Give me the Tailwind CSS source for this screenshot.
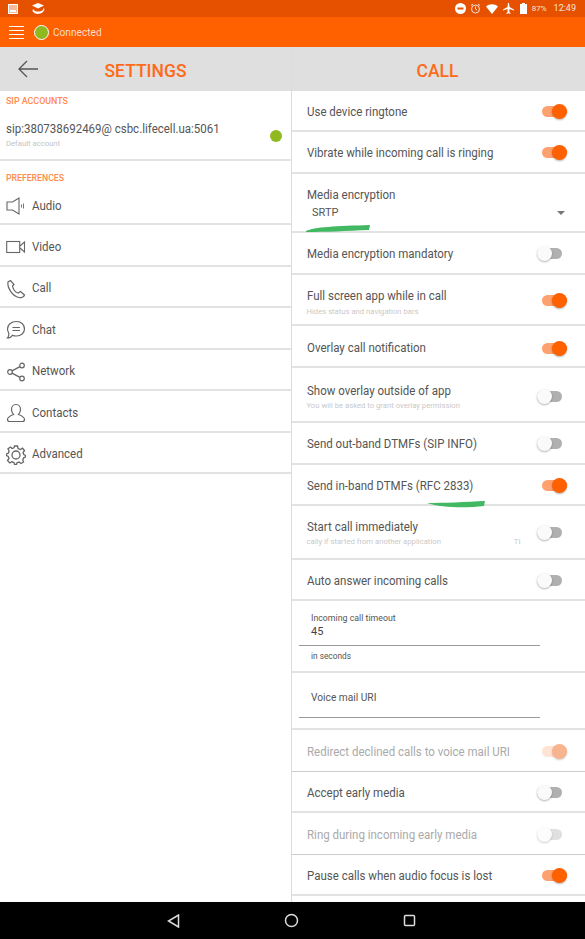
<!DOCTYPE html>
<html lang="en">
<head>
    <meta charset="UTF-8">
    <meta name="viewport" content="width=device-width, initial-scale=1.0">
    <title>Settings</title>
    <script src="https://cdn.jsdelivr.net/npm/@tailwindcss/browser@4"></script>
</head>
<body class="bg-white font-['Roboto',sans-serif] text-[#555]">
<div class="relative flex flex-col w-[585px] h-[939px] overflow-hidden">
    <!-- status bar -->
    <div class="flex items-center justify-between flex-none h-[17px] bg-[#e65100] pl-2 pr-[9px] text-white">
        <div class="flex items-center gap-[13px]">
            <svg class="w-[10px] h-[10px]" viewBox="0 0 10 10"><rect x="0.5" y="0.5" width="9" height="9" fill="#f5b99c" stroke="#fff" stroke-width="1"/><rect x="2" y="6" width="6" height="2" fill="#fff"/></svg>
            <svg class="w-[14px] h-[14px]" viewBox="0 0 14 14" fill="#fff"><path d="M7 1 L13 3.5 L7 6.5 L1 3.5 Z"/><path d="M2 7 C3.5 10 9 10.5 12 8 L12.5 6 L13.5 7 C13 12 4 14 1.500 9 Z"/></svg>
        </div>
        <div class="flex items-center text-[9px] text-[#f8e4d8]">
            <svg class="w-[11px] h-[11px] mr-[4px]" viewBox="0 0 11 11"><circle cx="5.500" cy="5.500" r="5.500" fill="#fff"/><rect x="2.500" y="4.500" width="6" height="2" fill="#e65100"/></svg>
            <svg class="w-[11px] h-[11px] mr-[5px]" viewBox="0 0 11 11" fill="none" stroke="#f8e4d8" stroke-width="1"><circle cx="5.500" cy="6" r="4"/><path d="M5.500 3.500V6L7 7M1 2.500L3 1M10 2.500L8 1"/></svg>
            <svg class="w-[12px] h-[10px] mr-[5px]" viewBox="0 0 12 10" fill="#fff"><path d="M0 2.500C3.500 -0.500 8.500 -0.500 12 2.500L6 10Z"/></svg>
            <svg class="w-[11px] h-[11px] mr-[6px]" viewBox="0 0 11 11" fill="#fff"><path d="M5 0H6L6.500 4L11 6.500V7.500L6.500 6L6.300 9L7.500 10V11L5.500 10.300L3.500 11V10L4.700 9L4.500 6L0 7.500V6.500L4.500 4Z"/></svg>
            <svg class="w-[7px] h-[11px] mr-[5px]" viewBox="0 0 7 11" fill="#fff"><path d="M2 0H5V1H7V11H0V1H2Z"/></svg>
            <span class="mr-[7px] text-[8px]">87%</span>
            <span>12:49</span>
        </div>
    </div>

    <!-- toolbar -->
    <div class="flex items-center flex-none h-[30px] bg-[#ff6000] pl-[9px]">
        <div class="flex flex-col gap-[3px] w-[15px]">
            <div class="h-px bg-white"></div><div class="h-px bg-white"></div><div class="h-px bg-white"></div><div class="h-px bg-white"></div>
        </div>
        <div class="w-[15px] h-[15px] ml-[10px] rounded-full bg-[#8fb821] border border-white"></div>
        <span class="ml-[4px] mt-[2px] text-[11px] origin-left scale-x-[0.92] text-[#fbdcc8]">Connected</span>
    </div>

    <div class="flex flex-1 min-h-0">
        <!-- left pane -->
        <div class="flex-none w-[292px] border-r border-[#dcdcdc]">
            <div class="relative flex items-center justify-center h-[44px] pt-[5px] bg-[#dfdfdf]">
                <svg class="absolute left-[17px] top-[13px] w-[22px] h-[18px]" viewBox="0 0 22 18" fill="none" stroke="#555" stroke-width="1.300"><path d="M21 9H2M10 1L2 9L10 17"/></svg>
                <span class="text-[17.500px] font-medium text-[#ff6a1a]">SETTINGS</span>
            </div>
            <div class="h-[21px] pl-[6px] pt-[5px] text-[8.900px] leading-[11px] font-medium text-[#ff8a4c]">SIP ACCOUNTS</div>
            <div class="flex items-center justify-between h-[49px] pr-[9px] pl-[6px] border-b-2 border-[#e2e2e2]">
                <div>
                    <div class="text-[12.500px] leading-[16px] origin-left scale-x-[0.92] text-[#555]">sip:380738692469@ csbc.lifecell.ua:5061</div>
                    <div class="text-[7.700px] leading-[13px] text-[#c4c4c4]">Default account</div>
                </div>
                <div class="w-[12px] h-[12px] rounded-full bg-[#8fb821]"></div>
            </div>
            <div class="h-[22px] pl-[6px] pt-[12px] text-[8.700px] leading-[11px] font-medium text-[#ff8a4c]">PREFERENCES</div>
            <div class="flex items-center h-[42px] pl-[6px] pt-[6px] border-b-2 border-[#e2e2e2]">
                <svg class="w-[20px] h-[18px] mr-[6px]" viewBox="0 0 20 18" fill="none" stroke="#666" stroke-width="1.100"><path d="M1 5H6.500L13 1V17L6.500 13H1Z"/><path d="M15.500 7.500V10.500M17.500 6.500V11.500" stroke-width="0.900"/></svg>
                <span class="text-[12.500px] origin-left scale-x-[0.92]">Audio</span>
            </div>
            <div class="flex items-center h-[41.500px] pl-[6px] pt-[5px] border-b-2 border-[#e2e2e2]">
                <svg class="w-[20px] h-[14px] mr-[6px]" viewBox="0 0 20 14" fill="none" stroke="#666" stroke-width="1.100"><rect x="0.700" y="1.500" width="13" height="11"/><path d="M14 6L18.500 2V12L14 8"/></svg>
                <span class="text-[12.500px] origin-left scale-x-[0.92]">Video</span>
            </div>
            <div class="flex items-center h-[41.500px] pl-[6px] pt-[5px] border-b-2 border-[#e2e2e2]">
                <svg class="w-[20px] h-[20px] mr-[6px]" viewBox="0 0 20 20" fill="none" stroke="#666" stroke-width="1.200"><path d="M4.500 1.500L2 3C1 8 6 17 13 18.500C15 19 18 18 18.500 16L14.500 12.500L12 14C9 13 7 9.500 6.500 7L8 5.500Z"/></svg>
                <span class="text-[12.500px] origin-left scale-x-[0.92]">Call</span>
            </div>
            <div class="flex items-center h-[41.500px] pl-[6px] pt-[5px] border-b-2 border-[#e2e2e2]">
                <svg class="w-[20px] h-[20px] mr-[6px]" viewBox="0 0 20 20" fill="none" stroke="#666" stroke-width="1.200"><path d="M10.500 1.500C15.500 1.500 18.500 5 18.500 9C18.500 13 15 16 10.500 16C9 16 7.500 15.800 6.500 15.200C5.500 17 3.500 18 1.500 18C3 16.500 3 15 2.800 13C2 12 1.500 10.500 1.500 9C1.500 5 5 1.500 10.500 1.500Z"/><path d="M6.500 7.500H14M6.500 10.500H14"/></svg>
                <span class="text-[12.500px] origin-left scale-x-[0.92]">Chat</span>
            </div>
            <div class="flex items-center h-[41.500px] pl-[6px] pt-[5px] border-b-2 border-[#e2e2e2]">
                <svg class="w-[20px] h-[20px] mr-[6px]" viewBox="0 0 20 20" fill="none" stroke="#666" stroke-width="1.200"><circle cx="4" cy="10" r="2.300"/><circle cx="16" cy="3.500" r="2.300"/><circle cx="16" cy="16.500" r="2.300"/><path d="M6 8.900L14 4.600M6 11.100L14 15.400"/></svg>
                <span class="text-[12.500px] origin-left scale-x-[0.92]">Network</span>
            </div>
            <div class="flex items-center h-[41.500px] pl-[6px] pt-[5px] border-b-2 border-[#e2e2e2]">
                <svg class="w-[20px] h-[20px] mr-[6px]" viewBox="0 0 20 20" fill="none" stroke="#666" stroke-width="1.200"><path d="M10 1.500C13 1.500 14.500 4 14.500 6.500C14.500 9 13.500 10.500 12.500 11.500C15 12.500 18.500 14 18.500 16.500C18.500 18 17.500 18.500 16.500 18.500H3.500C2.500 18.500 1.500 18 1.500 16.500C1.500 14 5 12.500 7.500 11.500C6.500 10.500 5.500 9 5.500 6.500C5.500 4 7 1.500 10 1.500Z"/></svg>
                <span class="text-[12.500px] origin-left scale-x-[0.92]">Contacts</span>
            </div>
            <div class="flex items-center h-[41.500px] pl-[6px] pt-[5px] border-b-2 border-[#e2e2e2]">
                <svg class="w-[20px] h-[20px] mr-[6px]" viewBox="0 0 20 20" fill="none" stroke="#666" stroke-width="1.300"><path d="M8.500 1H11.500L12 3.500L14.300 4.500L16.500 3.200L18.500 5.500L17 7.500L17.800 9.500L19.500 10.500V12L17.600 12.800L16.800 15L17.500 17L15 18.500L13.200 17L11 17.800L10.500 19.500H8.500L8 17.500L5.800 16.800L3.800 18L1.500 15.500L3 13.500L2.200 11.500L0.500 10.500V9L2.500 8L3 5.800L2 3.800L4.500 2L6 3.500L8 2.800Z"/><circle cx="10" cy="10" r="4"/></svg>
                <span class="text-[12.500px] origin-left scale-x-[0.92]">Advanced</span>
            </div>
        </div>

        <!-- right pane -->
        <div class="flex-1 min-w-0">
            <div class="flex items-center justify-center h-[44px] pt-[5px] bg-[#dfdfdf] pr-[2px]">
                <span class="text-[17.500px] font-medium text-[#ff6a1a]">CALL</span>
            </div>

            <div class="flex items-center justify-between h-[41px] pt-[2px] pl-[14.500px] pr-[18px] border-b-2 border-[#e2e2e2]">
                <span class="mt-[2px] text-[12.500px] origin-left scale-x-[0.92]">Use device ringtone</span>
                <div class="flex items-center justify-end w-[25px] h-[11px] rounded-full bg-[#ffa06f]"><div class="flex-none w-[15px] h-[15px] rounded-full bg-[#ff6000] shadow-[0_1px_2px_rgba(0,0,0,0.3)]"></div></div>
            </div>
            <div class="flex items-center justify-between h-[41.500px] pt-[2px] pl-[14.500px] pr-[18px] border-b-2 border-[#e2e2e2]">
                <span class="mt-[2px] text-[12.500px] origin-left scale-x-[0.92]">Vibrate while incoming call is ringing</span>
                <div class="flex items-center justify-end w-[25px] h-[11px] rounded-full bg-[#ffa06f]"><div class="flex-none w-[15px] h-[15px] rounded-full bg-[#ff6000] shadow-[0_1px_2px_rgba(0,0,0,0.3)]"></div></div>
            </div>
            <div class="flex flex-col h-[59.500px] pt-[13px] pl-[14.500px] pr-[19px] border-b-2 border-[#e2e2e2]">
                <span class="text-[12.500px] leading-[16px] origin-left scale-x-[0.92]">Media encryption</span>
                <div class="flex items-center justify-between mt-[3px] pl-[5.500px]">
                    <span class="text-[11px] leading-[14px]">SRTP</span>
                    <div class="w-0 h-0 mr-[1px] border-x-[4px] border-x-transparent border-t-[4px] border-t-[#777]"></div>
                </div>
            </div>
            <div class="flex items-center justify-between h-[41.500px] pt-[2px] pl-[14.500px] pr-[18px] border-b-2 border-[#e2e2e2]">
                <span class="mt-[2px] text-[12.500px] origin-left scale-x-[0.92]">Media encryption mandatory</span>
                <div class="flex items-center justify-start w-[25px] h-[11px] mr-[5.500px] rounded-full bg-[#b0b0b0]"><div class="flex-none w-[15px] h-[15px] rounded-full bg-[#fafafa] shadow-[0_1px_2px_rgba(0,0,0,0.3)]"></div></div>
            </div>
            <div class="flex items-center justify-between h-[51px] pt-[3px] pl-[14.500px] pr-[18px] border-b-2 border-[#e2e2e2]">
                <div class="self-start mt-[10px]">
                    <div class="text-[12.500px] leading-[15px] origin-left scale-x-[0.92]">Full screen app while in call</div>
                    <div class="text-[7.700px] leading-[17px] text-[#c9c9c9]">Hides status and navigation bars</div>
                </div>
                <div class="flex items-center justify-end w-[25px] h-[11px] rounded-full bg-[#ffa06f]"><div class="flex-none w-[15px] h-[15px] rounded-full bg-[#ff6000] shadow-[0_1px_2px_rgba(0,0,0,0.3)]"></div></div>
            </div>
            <div class="flex items-center justify-between h-[42px] pt-[5px] pl-[14.500px] pr-[18px] border-b-2 border-[#e2e2e2]">
                <span class="mt-[1px] text-[12.500px] origin-left scale-x-[0.92]">Overlay call notification</span>
                <div class="flex items-center justify-end w-[25px] h-[11px] rounded-full bg-[#ffa06f]"><div class="flex-none w-[15px] h-[15px] rounded-full bg-[#ff6000] shadow-[0_1px_2px_rgba(0,0,0,0.3)]"></div></div>
            </div>
            <div class="flex items-center justify-between h-[55px] pt-[4px] pl-[14.500px] pr-[18px] border-b-2 border-[#e2e2e2]">
                <div class="self-start mt-[11px]">
                    <div class="text-[12.500px] leading-[15px] origin-left scale-x-[0.92]">Show overlay outside of app</div>
                    <div class="text-[7.700px] leading-[15px] text-[#c9c9c9]">You will be asked to grant overlay permission</div>
                </div>
                <div class="flex items-center justify-start w-[25px] h-[11px] mr-[5.500px] rounded-full bg-[#b0b0b0]"><div class="flex-none w-[15px] h-[15px] rounded-full bg-[#fafafa] shadow-[0_1px_2px_rgba(0,0,0,0.3)]"></div></div>
            </div>
            <div class="flex items-center justify-between h-[42px] pt-[2px] pl-[14.500px] pr-[18px] border-b-2 border-[#e2e2e2]">
                <span class="mt-[2px] text-[12.500px] origin-left scale-x-[0.92]">Send out-band DTMFs (SIP INFO)</span>
                <div class="flex items-center justify-start w-[25px] h-[11px] mr-[5.500px] rounded-full bg-[#b0b0b0]"><div class="flex-none w-[15px] h-[15px] rounded-full bg-[#fafafa] shadow-[0_1px_2px_rgba(0,0,0,0.3)]"></div></div>
            </div>
            <div class="flex items-center justify-between h-[41.500px] pt-[2px] pl-[14.500px] pr-[18px] border-b-2 border-[#e2e2e2]">
                <span class="mt-[2px] text-[12.500px] origin-left scale-x-[0.92]">Send in-band DTMFs (RFC 2833)</span>
                <div class="flex items-center justify-end w-[25px] h-[11px] rounded-full bg-[#ffa06f]"><div class="flex-none w-[15px] h-[15px] rounded-full bg-[#ff6000] shadow-[0_1px_2px_rgba(0,0,0,0.3)]"></div></div>
            </div>
            <div class="flex items-center justify-between h-[53.500px] pt-[2px] pl-[14.500px] pr-[18px] border-b-2 border-[#e2e2e2]">
                <div class="flex-1 self-start mt-[11px]">
                    <div class="text-[12.500px] leading-[15px] origin-left scale-x-[0.92]">Start call immediately</div>
                    <div class="flex justify-between pr-[16px] text-[7.700px] leading-[15px] text-[#c9c9c9]"><span>cally if started from another application</span><span>TI</span></div>
                </div>
                <div class="flex items-center justify-start w-[25px] h-[11px] mr-[5.500px] rounded-full bg-[#b0b0b0]"><div class="flex-none w-[15px] h-[15px] rounded-full bg-[#fafafa] shadow-[0_1px_2px_rgba(0,0,0,0.3)]"></div></div>
            </div>
            <div class="flex items-center justify-between h-[41.500px] pt-[2px] pl-[14.500px] pr-[18px] border-b-2 border-[#e2e2e2]">
                <span class="mt-[2px] text-[12.500px] origin-left scale-x-[0.92]">Auto answer incoming calls</span>
                <div class="flex items-center justify-start w-[25px] h-[11px] mr-[5.500px] rounded-full bg-[#b0b0b0]"><div class="flex-none w-[15px] h-[15px] rounded-full bg-[#fafafa] shadow-[0_1px_2px_rgba(0,0,0,0.3)]"></div></div>
            </div>
            <div class="h-[72px] pt-[12px] border-b-2 border-[#e2e2e2]">
                <div class="w-[241px] ml-[7px] pl-[12px] pb-[6px] border-b border-[#999]">
                    <div class="text-[8.800px] leading-[11px]">Incoming call timeout</div>
                    <div class="text-[11px] leading-[15px] text-[#444]">45</div>
                </div>
                <div class="ml-[19px] mt-[5px] text-[8.300px] leading-[11px]">in seconds</div>
            </div>
            <div class="h-[57px] pt-[17px] border-b-2 border-[#e2e2e2]">
                <div class="w-[241px] h-[28px] ml-[7px] pl-[12px] border-b border-[#999] text-[10.200px] leading-[16px]">Voice mail URI</div>
            </div>
            <div class="flex items-center justify-between h-[41.500px] pt-[2px] pl-[14.500px] pr-[18px] border-b border-[#ccc]">
                <span class="mt-[2px] text-[12.500px] origin-left scale-x-[0.92] text-[#aaa]">Redirect declined calls to voice mail URI</span>
                <div class="flex items-center justify-end w-[25px] h-[11px] rounded-full bg-[#ffe3d4]"><div class="flex-none w-[15px] h-[15px] rounded-full bg-[#f8b48e] shadow-[0_1px_2px_rgba(0,0,0,0.2)]"></div></div>
            </div>
            <div class="flex items-center justify-between h-[41.500px] pt-[2px] pl-[14.500px] pr-[18px] border-b-2 border-[#e2e2e2]">
                <span class="mt-[2px] text-[12.500px] origin-left scale-x-[0.92]">Accept early media</span>
                <div class="flex items-center justify-start w-[25px] h-[11px] mr-[5.500px] rounded-full bg-[#b0b0b0]"><div class="flex-none w-[15px] h-[15px] rounded-full bg-[#fafafa] shadow-[0_1px_2px_rgba(0,0,0,0.3)]"></div></div>
            </div>
            <div class="flex items-center justify-between h-[41.500px] pt-[2px] pl-[14.500px] pr-[18px] border-b border-[#ccc]">
                <span class="mt-[2px] text-[12.500px] origin-left scale-x-[0.92] text-[#aaa]">Ring during incoming early media</span>
                <div class="flex items-center justify-start w-[25px] h-[11px] mr-[5.500px] rounded-full bg-[#e0e0e0]"><div class="flex-none w-[15px] h-[15px] rounded-full bg-[#fcfcfc] shadow-[0_1px_2px_rgba(0,0,0,0.2)]"></div></div>
            </div>
            <div class="flex items-center justify-between h-[41.500px] pt-[2px] pl-[14.500px] pr-[18px] border-b-2 border-[#e2e2e2]">
                <span class="mt-[2px] text-[12.500px] origin-left scale-x-[0.92]">Pause calls when audio focus is lost</span>
                <div class="flex items-center justify-end w-[25px] h-[11px] rounded-full bg-[#ffa06f]"><div class="flex-none w-[15px] h-[15px] rounded-full bg-[#ff6000] shadow-[0_1px_2px_rgba(0,0,0,0.3)]"></div></div>
            </div>
        </div>
    </div>

    <!-- green marker strokes drawn over the screenshot -->
    <svg class="absolute left-[306px] top-[224px] w-[66px] h-[9px]" viewBox="0 0 66 9"><path d="M0 7C8 3 30 2 64 1L63 6C40 7 20 8 0 8Z" fill="#41b861"/></svg>
    <svg class="absolute left-[427px] top-[500px] w-[60px] h-[9px]" viewBox="0 0 60 9"><path d="M0 3C15 3 40 2 58 1L57 6C40 8 15 8 0 3Z" fill="#41b861"/></svg>

    <!-- navigation bar -->
    <div class="flex items-center flex-none h-[37px] bg-black">
        <svg class="ml-[167px] w-[13px] h-[14px]" viewBox="0 0 13 14" fill="none" stroke="#ddd" stroke-width="1.500"><path d="M11.500 1V13L1.500 7Z"/></svg>
        <svg class="ml-[104px] w-[15px] h-[15px]" viewBox="0 0 15 15" fill="none" stroke="#ddd" stroke-width="1.500"><circle cx="7.500" cy="7.500" r="6"/></svg>
        <svg class="ml-[104px] w-[13px] h-[13px]" viewBox="0 0 13 13" fill="none" stroke="#ddd" stroke-width="1.500"><rect x="1.500" y="1.500" width="10" height="10" rx="1"/></svg>
    </div>
</div>
</body>
</html>
